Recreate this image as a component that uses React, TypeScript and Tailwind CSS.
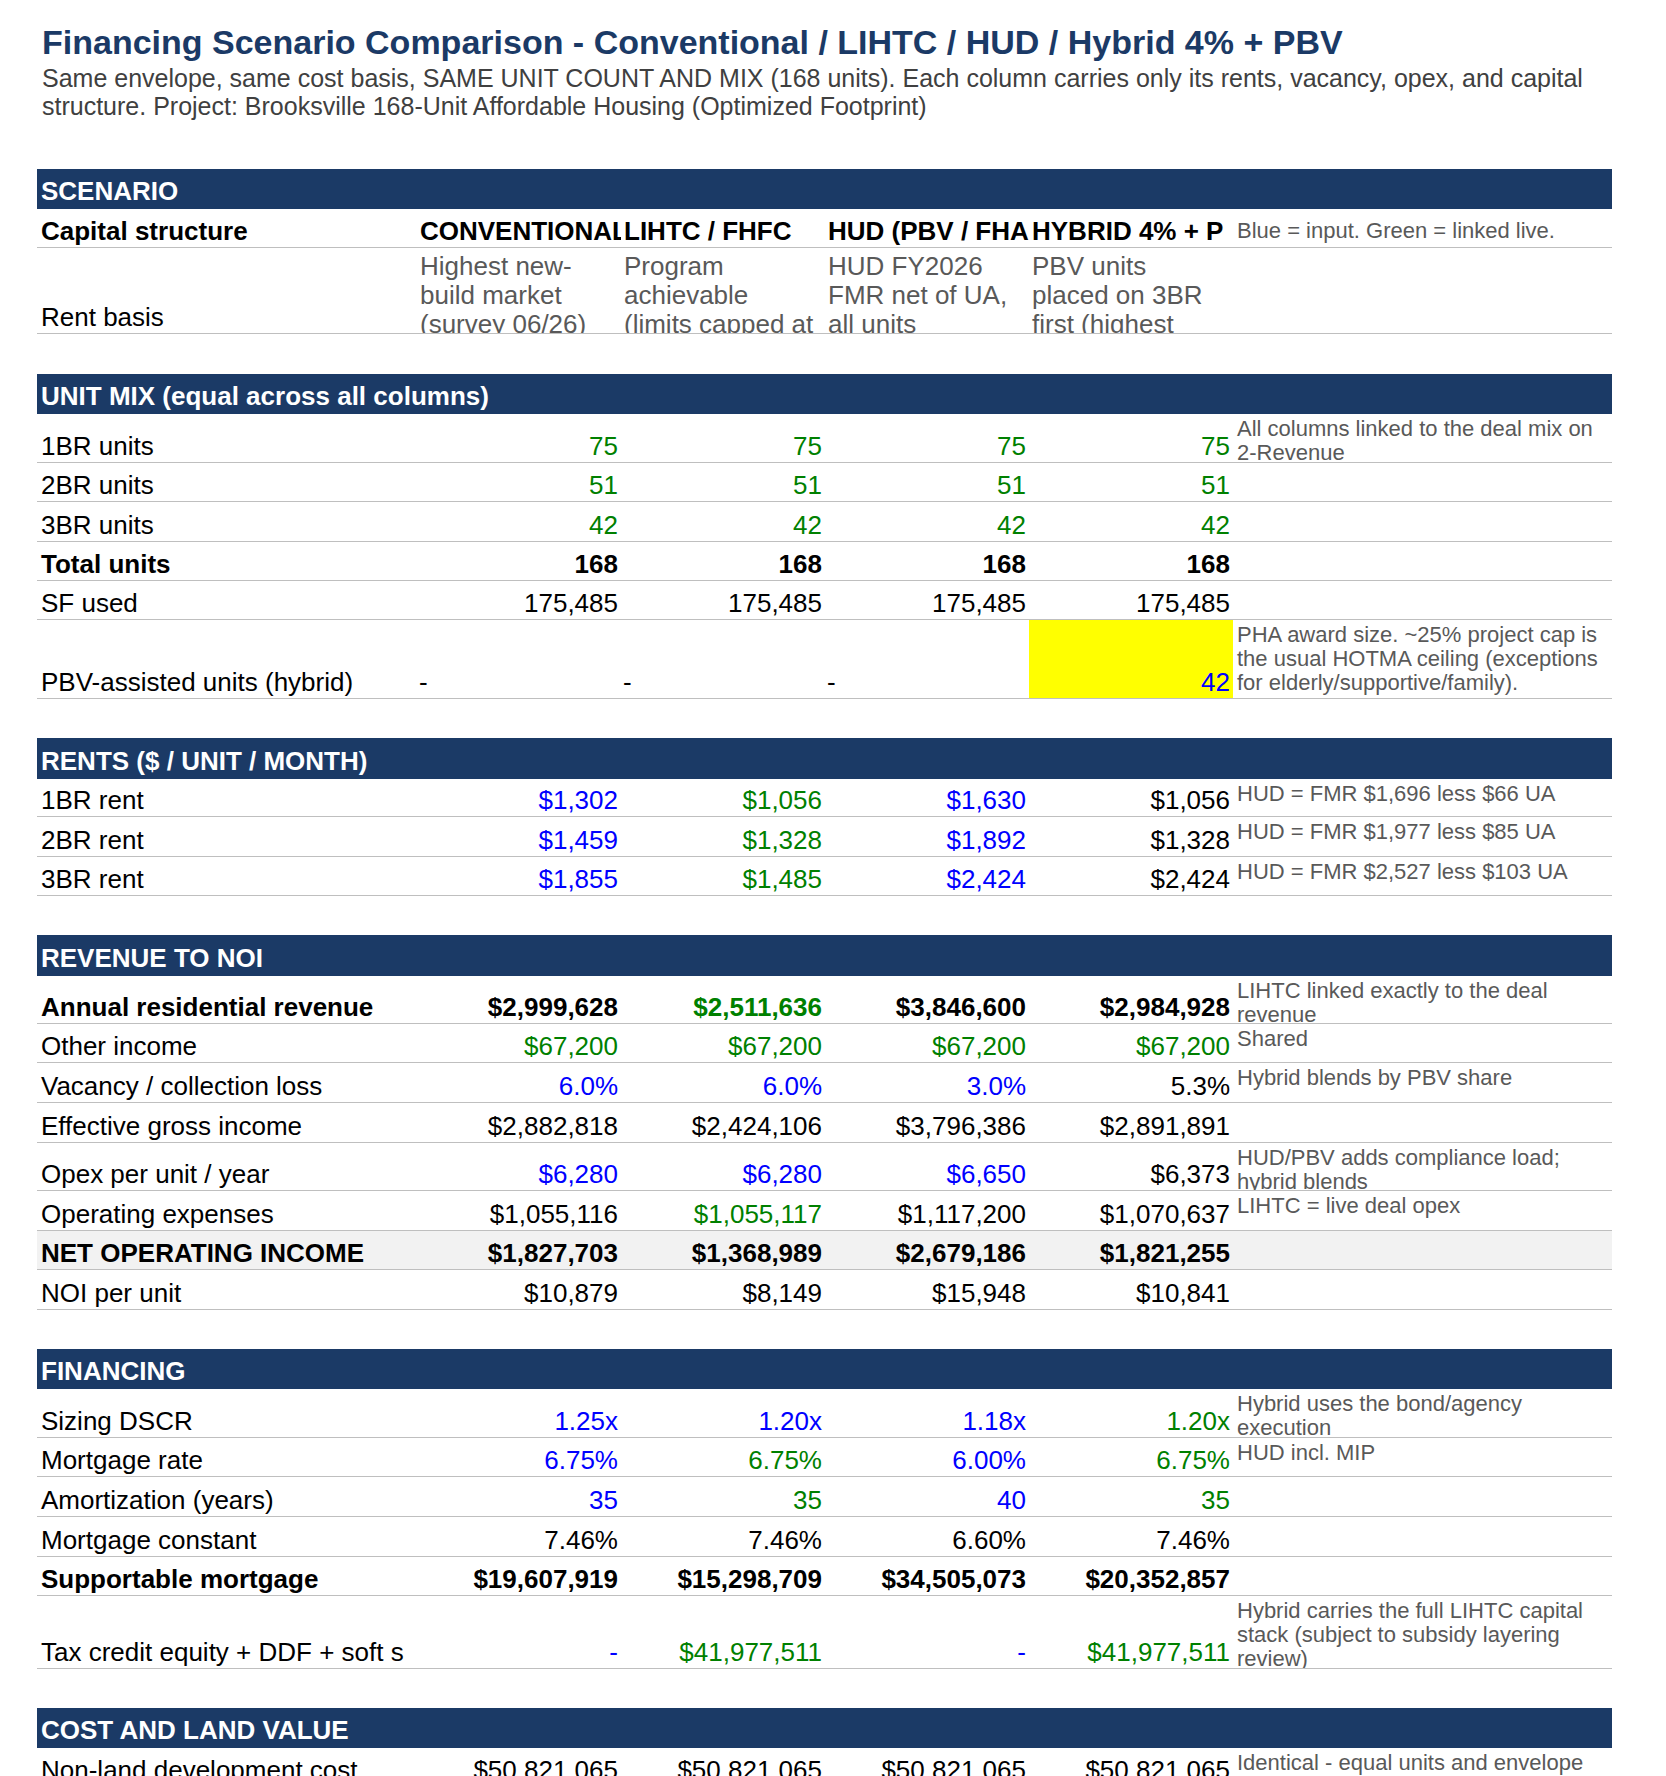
import clsx from 'clsx';

type Tone = 'k' | 'b' | 'g';

type Val = {
  text: string;
  tone: Tone;
  left?: boolean;
  hl?: boolean;
};

type Row = {
  label: string;
  h: string;
  bold?: boolean;
  shade?: boolean;
  vals: Val[];
  note?: string[];
};

type Section = {
  title: string;
  barH: string;
  gapH: string;
  rows: Row[];
};

const TONE: Record<Tone, string> = {
  k: 'text-black',
  b: 'text-[#0000ff]',
  g: 'text-[#008000]',
};

const GRID = 'grid grid-cols-[380px_204px_204px_204px_204px_379px]';

const k = (text: string): Val => ({ text, tone: 'k' });
const b = (text: string): Val => ({ text, tone: 'b' });
const g = (text: string): Val => ({ text, tone: 'g' });
const four = (v: Val): Val[] => [v, v, v, v];

const RENT_BASIS: string[][] = [
  ['Highest new-', 'build market', '(survey 06/26)', 'rents'],
  ['Program', 'achievable', '(limits capped at', 'market)'],
  ['HUD FY2026', 'FMR net of UA,', 'all units'],
  ['PBV units', 'placed on 3BR', 'first (highest', 'FMR)'],
];

const SECTIONS: Section[] = [
  {
    title: 'UNIT MIX (equal across all columns)',
    barH: 'h-[40px]',
    gapH: 'h-[39px]',
    rows: [
      {
        label: '1BR units',
        h: 'h-[49px]',
        vals: four(g('75')),
        note: ['All columns linked to the deal mix on', '2-Revenue'],
      },
      { label: '2BR units', h: 'h-[39px]', vals: four(g('51')) },
      { label: '3BR units', h: 'h-[40px]', vals: four(g('42')) },
      { label: 'Total units', h: 'h-[39px]', bold: true, vals: four(k('168')) },
      { label: 'SF used', h: 'h-[39px]', vals: four(k('175,485')) },
      {
        label: 'PBV-assisted units (hybrid)',
        h: 'h-[79px]',
        vals: [
          { text: '-', tone: 'k', left: true },
          { text: '-', tone: 'k', left: true },
          { text: '-', tone: 'k', left: true },
          { text: '42', tone: 'b', hl: true },
        ],
        note: [
          'PHA award size. ~25% project cap is',
          'the usual HOTMA ceiling (exceptions',
          'for elderly/supportive/family).',
        ],
      },
    ],
  },
  {
    title: 'RENTS ($ / UNIT / MONTH)',
    barH: 'h-[41px]',
    gapH: 'h-[39px]',
    rows: [
      {
        label: '1BR rent',
        h: 'h-[38px]',
        vals: [b('$1,302'), g('$1,056'), b('$1,630'), k('$1,056')],
        note: ['HUD = FMR $1,696 less $66 UA'],
      },
      {
        label: '2BR rent',
        h: 'h-[40px]',
        vals: [b('$1,459'), g('$1,328'), b('$1,892'), k('$1,328')],
        note: ['HUD = FMR $1,977 less $85 UA'],
      },
      {
        label: '3BR rent',
        h: 'h-[39px]',
        vals: [b('$1,855'), g('$1,485'), b('$2,424'), k('$2,424')],
        note: ['HUD = FMR $2,527 less $103 UA'],
      },
    ],
  },
  {
    title: 'REVENUE TO NOI',
    barH: 'h-[41px]',
    gapH: 'h-[39px]',
    rows: [
      {
        label: 'Annual residential revenue',
        h: 'h-[48px]',
        bold: true,
        vals: [k('$2,999,628'), g('$2,511,636'), k('$3,846,600'), k('$2,984,928')],
        note: ['LIHTC linked exactly to the deal', 'revenue'],
      },
      { label: 'Other income', h: 'h-[39px]', vals: four(g('$67,200')), note: ['Shared'] },
      {
        label: 'Vacancy / collection loss',
        h: 'h-[40px]',
        vals: [b('6.0%'), b('6.0%'), b('3.0%'), k('5.3%')],
        note: ['Hybrid blends by PBV share'],
      },
      {
        label: 'Effective gross income',
        h: 'h-[40px]',
        vals: [k('$2,882,818'), k('$2,424,106'), k('$3,796,386'), k('$2,891,891')],
      },
      {
        label: 'Opex per unit / year',
        h: 'h-[48px]',
        vals: [b('$6,280'), b('$6,280'), b('$6,650'), k('$6,373')],
        note: ['HUD/PBV adds compliance load;', 'hybrid blends'],
      },
      {
        label: 'Operating expenses',
        h: 'h-[40px]',
        vals: [k('$1,055,116'), g('$1,055,117'), k('$1,117,200'), k('$1,070,637')],
        note: ['LIHTC = live deal opex'],
      },
      {
        label: 'NET OPERATING INCOME',
        h: 'h-[39px]',
        bold: true,
        shade: true,
        vals: [k('$1,827,703'), k('$1,368,989'), k('$2,679,186'), k('$1,821,255')],
      },
      {
        label: 'NOI per unit',
        h: 'h-[40px]',
        vals: [k('$10,879'), k('$8,149'), k('$15,948'), k('$10,841')],
      },
    ],
  },
  {
    title: 'FINANCING',
    barH: 'h-[40px]',
    gapH: 'h-[39px]',
    rows: [
      {
        label: 'Sizing DSCR',
        h: 'h-[49px]',
        vals: [b('1.25x'), b('1.20x'), b('1.18x'), g('1.20x')],
        note: ['Hybrid uses the bond/agency', 'execution'],
      },
      {
        label: 'Mortgage rate',
        h: 'h-[39px]',
        vals: [b('6.75%'), g('6.75%'), b('6.00%'), g('6.75%')],
        note: ['HUD incl. MIP'],
      },
      {
        label: 'Amortization (years)',
        h: 'h-[40px]',
        vals: [b('35'), g('35'), b('40'), g('35')],
      },
      {
        label: 'Mortgage constant',
        h: 'h-[40px]',
        vals: [k('7.46%'), k('7.46%'), k('6.60%'), k('7.46%')],
      },
      {
        label: 'Supportable mortgage',
        h: 'h-[39px]',
        bold: true,
        vals: [k('$19,607,919'), k('$15,298,709'), k('$34,505,073'), k('$20,352,857')],
      },
      {
        label: 'Tax credit equity + DDF + soft s',
        h: 'h-[73px]',
        vals: [b('-'), g('$41,977,511'), b('-'), g('$41,977,511')],
        note: [
          'Hybrid carries the full LIHTC capital',
          'stack (subject to subsidy layering',
          'review)',
        ],
      },
    ],
  },
  {
    title: 'COST AND LAND VALUE',
    barH: 'h-[40px]',
    gapH: 'h-[39px]',
    rows: [
      {
        label: 'Non-land development cost',
        h: 'h-[39px]',
        vals: four(k('$50,821,065')),
        note: ['Identical - equal units and envelope'],
      },
    ],
  },
];

function SectionBar({ title, h }: { title: string; h: string }) {
  return (
    <div
      className={clsx(
        'flex items-end bg-[#1b3a66] pl-[4px] pb-[4px] text-[26px] font-bold leading-7 text-white',
        h,
      )}
    >
      {title}
    </div>
  );
}

function Note({ lines, bottom }: { lines?: string[]; bottom?: boolean }) {
  return (
    <div
      className={clsx(
        'flex flex-col overflow-hidden whitespace-nowrap pl-[4px] text-[22px] font-normal leading-[24px] text-[#595959]',
        bottom ? 'justify-end pb-[4px]' : 'pt-[3px]',
      )}
    >
      {lines?.map((l) => (
        <span key={l}>{l}</span>
      ))}
    </div>
  );
}

function DataRow({ row }: { row: Row }) {
  return (
    <div
      className={clsx(
        GRID,
        row.h,
        'border-b border-[#bfbfbf]',
        row.shade && 'bg-[#f2f2f2]',
        row.bold && 'font-bold',
      )}
    >
      <div className="flex items-end overflow-hidden whitespace-nowrap pl-[4px] pb-[2px]">
        {row.label}
      </div>
      {row.vals.map((v, i) => (
        <div
          key={i}
          className={clsx(
            'flex items-end overflow-hidden whitespace-nowrap pb-[2px]',
            v.left ? 'justify-start pl-[2px]' : 'justify-end pr-[3px]',
            TONE[v.tone],
            v.hl && 'bg-[#ffff00]',
          )}
        >
          {v.text}
        </div>
      ))}
      <Note lines={row.note} />
    </div>
  );
}

function ScenarioBlock() {
  return (
    <>
      <SectionBar title="SCENARIO" h="h-[40px]" />
      <div className={clsx(GRID, 'h-[39px] border-b border-[#bfbfbf] font-bold')}>
        <div className="flex items-end overflow-hidden whitespace-nowrap pl-[4px] pb-[2px]">
          Capital structure
        </div>
        {['CONVENTIONAL', 'LIHTC / FHFC', 'HUD (PBV / FHA', 'HYBRID 4% + P'].map((t) => (
          <div key={t} className="flex items-end overflow-hidden whitespace-nowrap pl-[3px] pb-[2px]">
            {t}
          </div>
        ))}
        <Note lines={['Blue = input. Green = linked live.']} bottom />
      </div>
      <div className={clsx(GRID, 'h-[86px] border-b border-[#bfbfbf]')}>
        <div className="flex items-end overflow-hidden whitespace-nowrap pl-[4px] pb-[2px]">
          Rent basis
        </div>
        {RENT_BASIS.map((lines, i) => (
          <div
            key={i}
            className="flex flex-col overflow-hidden whitespace-nowrap pl-[3px] pt-[4px] leading-[29px] text-[#595959]"
          >
            {lines.map((l) => (
              <span key={l}>{l}</span>
            ))}
          </div>
        ))}
        <div />
      </div>
      <div className="h-[40px]" />
    </>
  );
}

export default function App() {
  return (
    <div className="min-h-screen bg-white pt-[22px] pl-[37px] font-['Liberation_Sans',Arial,sans-serif] text-black">
      <h1 className="ml-[5px] text-[34px] font-bold leading-[40px] text-[#1b3a66]">
        Financing Scenario Comparison - Conventional / LIHTC / HUD / Hybrid 4% + PBV
      </h1>
      <p className="mt-[2px] ml-[5px] whitespace-nowrap text-[25px] leading-7 text-[#404040]">
        Same envelope, same cost basis, SAME UNIT COUNT AND MIX (168 units). Each column carries
        only its rents, vacancy, opex, and capital
        <br />
        structure. Project: Brooksville 168-Unit Affordable Housing (Optimized Footprint)
      </p>

      <div className="mt-[49px] w-[1575px] text-[26px] leading-7">
        <ScenarioBlock />
        {SECTIONS.map((s) => (
          <section key={s.title}>
            <SectionBar title={s.title} h={s.barH} />
            {s.rows.map((r) => (
              <DataRow key={r.label} row={r} />
            ))}
            <div className={s.gapH} />
          </section>
        ))}
      </div>
    </div>
  );
}
